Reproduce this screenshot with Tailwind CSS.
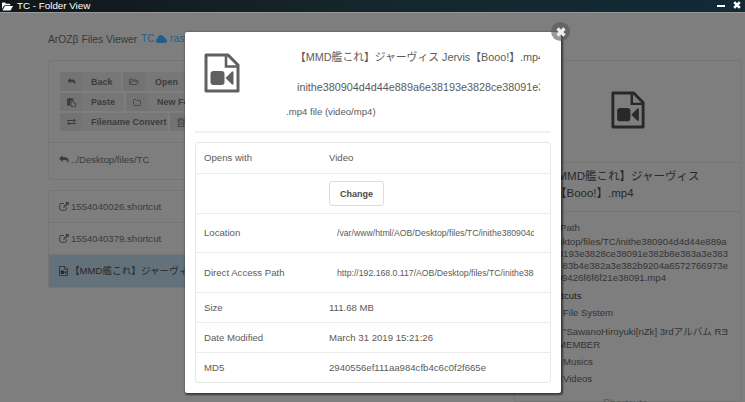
<!DOCTYPE html>
<html lang="en">
<head>
<meta charset="utf-8">
<title>TC - Folder View</title>
<script src="https://cdn.jsdelivr.net/npm/@tailwindcss/browser@4"></script>
</head>
<body class="h-[402px] w-[745px] overflow-hidden bg-[#7e7e7e] text-[9.6px] leading-[12px] text-[#3b3b3b] font-['Liberation_Sans','Noto_Sans_CJK_JP',sans-serif]">
<svg class="hidden">
  <symbol id="video" viewBox="0 0 36 40">
    <path d="M2 2H24L34 12V38H2Z" fill="none" stroke="currentColor" stroke-width="3" stroke-linejoin="round"/>
    <path d="M22 2V13.5H34" fill="none" stroke="currentColor" stroke-width="2.6"/>
    <rect x="6.500" y="18" width="14" height="14" rx="3" fill="currentColor"/>
    <path d="M21.500 25L28 18.500H29.500V31.500H28Z" fill="currentColor"/>
  </symbol>
  <symbol id="reply" viewBox="0 0 16 14">
    <path d="M0 5.500L6 0V3.200H9C14 3.200 16 6 15.500 9.500C15.300 11 14.500 12.500 13.800 13.500C14.200 9.500 13 7.800 9 7.800H6V11Z" fill="currentColor"/>
  </symbol>
  <symbol id="share" viewBox="0 0 20 18">
    <path d="M10 3H4Q1.500 3 1.500 5.500V14Q1.500 16.500 4 16.500H12.500Q15 16.500 15 14V10.500" fill="none" stroke="currentColor" stroke-width="1.900"/>
    <path d="M12.500 0H19.500V7L17 4.800L10 11.800L8 9.800L15 2.700Z" fill="currentColor"/>
  </symbol>
  <symbol id="cross" viewBox="0 0 10 10">
    <path d="M1.500 1.500L8.500 8.500M8.500 1.500L1.500 8.500" stroke="currentColor" stroke-width="3.200"/>
  </symbol>
</svg>

<header class="flex h-[12px] items-center bg-linear-to-r from-[#101619] via-[#15272c] to-[#112a36] pl-[2px] pr-[4px] text-white">
  <svg class="h-[9px] w-[11px]" viewBox="0 0 22 18"><path d="M0 14V2Q0 1 1 1H6L8 3.500H15Q16.500 3.500 16.500 5V6.500H6Q4.500 6.500 3.500 8Z" fill="currentColor"/><path d="M1 17L5.500 8.500Q6 8 7 8H22L17.500 16Q17 17 16 17Z" fill="currentColor"/></svg>
  <span class="ml-[4px] flex-1 text-[9.8px]">TC - Folder View</span>
  <span class="mr-[8px] h-[2px] w-[8px] bg-white"></span>
  <svg class="mb-[2px] h-[8px] w-[8px]"><use href="#cross"/></svg>
</header>

<div class="flex h-[390px] border-t border-[#999]">
  <main class="ml-[48px] w-[458px] shrink-0">
    <nav class="mt-[20px] flex h-[13px] items-center whitespace-nowrap text-[10.300px]">
      <span class="w-[93px] text-[#393939]">ArOZβ Files Viewer</span>
      <span class="w-[13px] pl-[13px]"></span>
    </nav>
    <section class="mt-[14px] h-[120px] w-[458px] rounded-[2px] border border-[#757575]">
      <div class="flex h-[82px] flex-col gap-[2px] border-b border-[#757575] pl-[11px] pt-[11px] text-[9px] font-bold whitespace-nowrap text-[#3c3c3c]">
        <div class="flex h-[19px] gap-[2px]">
          <div class="flex w-[61px] items-center bg-[#777]"><span class="flex h-full w-[22px] items-center justify-center bg-[#737373]"><svg class="h-[7px] w-[9px]"><use href="#reply"/></svg></span><span class="ml-[9px]">Back</span></div>
          <div class="flex w-[63px] items-center bg-[#777]"><span class="flex h-full w-[22px] items-center justify-center bg-[#737373]"><svg class="h-[7px] w-[10px]" viewBox="0 0 20 14"><path d="M1 12V2H6L8 4H15V6M1 12L5 6H19L15 13H2Z" fill="none" stroke="currentColor" stroke-width="1.500"/></svg></span><span class="ml-[10px]">Open</span></div>
        </div>
        <div class="flex h-[18px] gap-[2px]">
          <div class="flex w-[64px] items-center bg-[#777]"><span class="flex h-full w-[22px] items-center justify-center bg-[#737373]"><svg class="h-[9px] w-[9px]" viewBox="0 0 18 18"><path d="M0 1H4V0H9V1H13V5H7V15H0Z" fill="currentColor"/><path d="M8 6H13V10H17V17H8Z" fill="none" stroke="currentColor" stroke-width="1.600"/></svg></span><span class="ml-[9px]">Paste</span></div>
          <div class="flex w-[86px] items-center bg-[#777]"><span class="flex h-full w-[22px] items-center justify-center bg-[#737373]"><svg class="h-[7px] w-[8px]" viewBox="0 0 16 14"><path d="M1 3Q1 1 3 1H6L8 3H13Q15 3 15 5V11Q15 13 13 13H3Q1 13 1 11Z" fill="none" stroke="currentColor" stroke-width="1.500"/></svg></span><span class="ml-[9px]">New Folder</span></div>
        </div>
        <div class="flex h-[18px] gap-[2px]">
          <div class="flex w-[108px] items-center bg-[#777]"><span class="flex h-full w-[22px] items-center justify-center bg-[#737373]"><svg class="h-[8px] w-[9px]" viewBox="0 0 18 16"><path d="M0 5H14M4 11H18" stroke="currentColor" stroke-width="2.200"/><path d="M13 1L18 5L13 9ZM5 7L0 11L5 15Z" fill="currentColor"/></svg></span><span class="ml-[9px]">Filename Convert</span></div>
          <div class="flex w-[64px] items-center bg-[#777]"><span class="flex h-full w-[22px] items-center justify-center bg-[#737373]"><svg class="h-[9px] w-[8px]" viewBox="0 0 16 18"><path d="M0 4H16M5 4V1H11V4M2.500 4V17H13.500V4M6 7V14M10 7V14" fill="none" stroke="currentColor" stroke-width="1.600"/></svg></span><span class="ml-[9px]">Delete</span></div>
        </div>
      </div>
      <div class="flex h-[33px] items-center pl-[10px]"><svg class="mr-[2px] h-[9px] w-[10px]"><use href="#reply"/></svg><span>../Desktop/files/TC</span></div>
    </section>
    <section class="mt-[10px] h-[98px] w-[458px] whitespace-nowrap rounded-[2px] border border-[#757575]">
      <div class="flex h-[32px] items-center border-b border-[#757575] pl-[10px]"><svg class="mr-[2px] h-[9px] w-[10px]"><use href="#share"/></svg>1554040026.shortcut</div>
      <div class="flex h-[32px] items-center border-b border-[#757575] pl-[10px]"><svg class="mr-[2px] h-[9px] w-[10px]"><use href="#share"/></svg>1554040379.shortcut</div>
      <div class="flex h-[32px] items-center bg-[#63717a] pl-[10px] text-[#292929]"><svg class="mr-[2px] h-[10px] w-[9px]"><use href="#video"/></svg>【MMD艦これ】ジャーヴィス</div>
    </section>
  </main>

  <aside class="ml-[8px] mt-[47px] w-[227px] shrink-0 border border-[#757575] text-[#343434]">
    <div class="flex h-[102px] items-center justify-center border-b border-[#757575] pb-[3px]"><svg class="h-[38px] w-[34px] text-[#282828]"><use href="#video"/></svg></div>
    <div class="h-[49px] whitespace-nowrap border-b border-[#757575] pl-[31px] pt-[5px] text-[11.500px] leading-[17px] text-[#282828]">【MMD艦これ】ジャーヴィス<div class="pl-[9px]">【Booo!】.mp4</div></div>
    <div class="whitespace-nowrap pl-[25px] pt-[10px]">
      <div class="pl-[20px]">Path</div>
      <div class="mt-[2px] w-[190px] text-right leading-[12px]">
        <div class="pr-[4px]">./Desktop/files/TC/inithe380904d4d44e889a</div>
        <div class="pr-[2px]">6e38193e3828ce38091e382b8e383a3e383</div>
        <div class="pr-[2px]">83b4e382a3e382b9204a6572766973e</div>
        <div class="pr-[64px]">3809426f6f6f21e38091.mp4</div>
      </div>
      <div class="mt-[6px] pl-[1px] text-[#222]">Shortcuts</div>
      <div class="mt-[5px] pl-[23px]">File System</div>
      <div class="mt-[7px] pl-[23px]">"SawanoHiroyuki[nZk] 3rdアルバム RƎ</div>
      <div class="mt-[1px] pl-[18px]">MEMBER</div>
      <div class="mt-[5px] pl-[23px]">Musics</div>
      <div class="mt-[5px] pl-[23px]">Videos</div>
      <div class="mt-[12px] pl-[63px] text-[10.500px] text-[#555]">Shortcuts</div>
    </div>
  </aside>
</div>

<div class="absolute left-[141px] top-[33px] flex items-center whitespace-nowrap text-[10.300px] text-[#215e89]"><span class="w-[15px]">TC</span><svg class="h-[8px] w-[11px]" viewBox="0 0 22 16"><path d="M5 16Q0 16 0 11Q0 7.500 3.500 6.500Q4 0 10 0Q14 0 15.500 4Q19 4 19 7.500Q22 9 22 12Q22 16 18 16Z" fill="currentColor"/></svg><span class="ml-[3px]">raspberry</span></div>

<div class="absolute left-[185px] top-[32px] h-[361px] w-[376px] rounded-[2px] bg-white px-[10px] text-[#5b5b5b] shadow-[1px_1px_2px_1px_rgba(0,0,0,.55)]">
  <div class="flex h-[101px] border-b-2 border-[#f1f1f1]">
    <svg class="ml-[9px] mt-[21px] h-[40px] w-[36px] shrink-0 text-[#606060]"><use href="#video"/></svg>
    <div class="ml-[46px] w-[254px] overflow-hidden whitespace-nowrap">
      <div class="pl-[9px] pt-[17px] text-[10.800px] leading-[16px]">【MMD艦これ】ジャーヴィス Jervis【Booo!】.mp4</div>
      <div class="pl-[11px] pt-[14px] text-[10.800px] leading-[16px]">inithe380904d4d44e889a6e38193e3828ce38091e382b8e383a3</div>
      <div class="pt-[11px]">.mp4 file (video/mp4)</div>
    </div>
  </div>
  <div class="mt-[9px] h-[241px] w-[356px] rounded-[3px] border border-[#e8e8e8] *:flex *:items-center *:pl-[8px] *:not-last:border-b *:border-[#ececec]">
    <div class="h-[31px]"><span class="w-[125px]">Opens with</span><span>Video</span></div>
    <div class="h-[40px]"><span class="w-[125px]"></span><button class="h-[25px] w-[55px] rounded-[3px] border border-[#dcdcdc] text-[9px] font-bold text-[#4b4b4b]">Change</button></div>
    <div class="h-[39px]"><span class="w-[125px]">Location</span><span class="ml-[8px] w-[197px] overflow-hidden whitespace-nowrap text-[8.700px]">/var/www/html/AOB/Desktop/files/TC/inithe380904d4d</span></div>
    <div class="h-[40px]"><span class="w-[125px]">Direct Access Path</span><span class="ml-[8px] w-[197px] overflow-hidden whitespace-nowrap text-[8.700px]">http://192.168.0.117/AOB/Desktop/files/TC/inithe380904d4d</span></div>
    <div class="h-[30px]"><span class="w-[125px]">Size</span><span>111.68 MB</span></div>
    <div class="h-[30px]"><span class="w-[125px]">Date Modified</span><span>March 31 2019 15:21:26</span></div>
    <div class="h-[29px]"><span class="w-[125px]">MD5</span><span>2940556ef111aa984cfb4c6c0f2f665e</span></div>
  </div>
</div>
<div class="absolute left-[551px] top-[22px] flex size-[19px] items-center justify-center rounded-full bg-[#555]/60 text-[#eee]"><svg class="size-[10px]"><use href="#cross"/></svg></div>
</body>
</html>
